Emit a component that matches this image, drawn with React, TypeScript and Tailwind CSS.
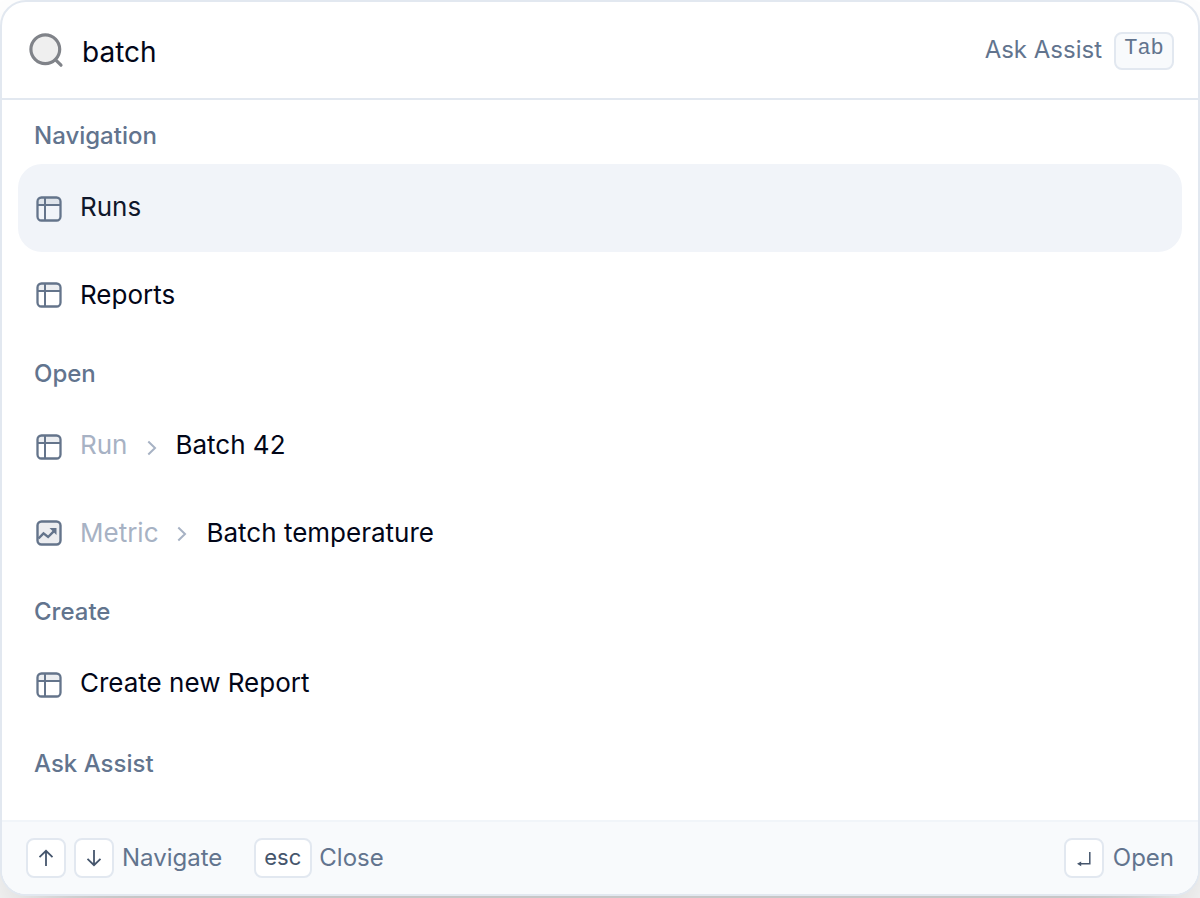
import React from 'react';

interface Item {
    label: string;
    parent?: string;
    icon: 'table' | 'metric';
    selected?: boolean;
}

interface Group {
    title: string;
    items: Item[];
}

const groups: Group[] = [
    {
        title: 'Navigation',
        items: [
            { label: 'Runs', icon: 'table', selected: true },
            { label: 'Reports', icon: 'table' },
        ],
    },
    {
        title: 'Open',
        items: [
            { label: 'Batch 42', parent: 'Run', icon: 'table' },
            { label: 'Batch temperature', parent: 'Metric', icon: 'metric' },
        ],
    },
    {
        title: 'Create',
        items: [{ label: 'Create new Report', icon: 'table' }],
    },
    { title: 'Ask Assist', items: [] },
];

const SearchIcon = () => (
    <svg className="mt-px" width="36" height="36" viewBox="0 0 36 36" fill="none" stroke="#808389" strokeWidth="3.2" strokeLinecap="round">
        <circle cx="17.3" cy="16.2" r="14.4" fill="#efefef" />
        <path d="M27.6 26.8L33 32.2" />
    </svg>
);

const TableIcon = () => (
    <svg width="26" height="26" viewBox="0 0 26 26" fill="none" stroke="#64748b" strokeWidth="2.3">
        <path d="M2 2h22v7H2z" fill="#64748b" fillOpacity="0.12" stroke="none" />
        <rect x="1.5" y="1.5" width="23" height="23" rx="4" />
        <path d="M1.5 9h23M9 1.5v23" strokeWidth="2" />
    </svg>
);

const MetricIcon = () => (
    <svg width="26" height="26" viewBox="0 0 26 26" fill="none" stroke="#64748b" strokeWidth="2.4">
        <rect x="1.5" y="1.5" width="23" height="23" rx="4" fill="#ecedf0" />
        <path d="M2.5 18.5L7.5 13.4l4.6 3.6 6.6-6.6" />
        <path d="M13.5 8h7v7z" fill="#64748b" stroke="none" />
    </svg>
);

const Chevron = () => (
    <svg width="10" height="16" viewBox="0 0 10 16" fill="none" stroke="#a7b2c4" strokeWidth="2">
        <path d="M1.3 1.5L8 8l-6.7 6.5" />
    </svg>
);

const Key = ({ children, className = 'w-10' }: { children: React.ReactNode; className?: string }) => (
    <kbd className={`flex h-10 items-center justify-center rounded-lg border-2 border-slate-200 bg-white font-[Inter,sans-serif] text-[22px] text-slate-600 ${className}`}>
        {children}
    </kbd>
);

const Row = ({ item }: { item: Item }) => (
    <li className={`group flex h-[88px] items-center rounded-3xl pl-[18px] ${item.selected ? 'bg-[#f1f4f9] text-slate-900' : 'text-slate-950'}`}>
        <span className="mt-0.5 mr-[18px] shrink-0 group-even:mt-0 group-even:mb-0.5">
            {item.icon === 'metric' ? <MetricIcon /> : <TableIcon />}
        </span>
        {item.parent && (
            <>
                <span className="mb-[3px] text-[#a7b2c4]">{item.parent}</span>
                <span className="mt-[3px] mr-[18px] ml-5 group-even:mt-0 group-even:mr-5 group-even:ml-[18px]"><Chevron /></span>
            </>
        )}
        <span className="mb-[3px]">{item.label}</span>
    </li>
);

const App: React.FC = () => {
    return (
        <div className="h-[898px] overflow-hidden bg-white font-[Inter,sans-serif]">
            <div className="flex h-[896px] flex-col overflow-hidden rounded-[26px] border-2 border-slate-200 bg-white shadow-[0_50px_100px_-24px_rgba(0,0,0,0.32)]">
                <header className="flex h-[98px] shrink-0 items-center border-b-2 border-slate-200 pr-6 pl-[26px]">
                    <SearchIcon />
                    <span className="mt-1 ml-[18px] text-[28px] text-slate-950">batch</span>
                    <span className="ml-auto text-2xl text-slate-500">Ask Assist</span>
                    <kbd className="mt-0.5 ml-3 flex h-[38px] w-[60px] justify-center rounded-lg border-2 border-slate-200 bg-slate-50 font-['Liberation_Mono',monospace] text-[22px] leading-[29px] text-slate-500">
                        Tab
                    </kbd>
                </header>

                <main className="flex-1 overflow-hidden px-4 text-[26px]">
                    {groups.map((group) => (
                        <section key={group.title} className="pt-[18px] first:pt-5 last:pt-5">
                            <h2 className="mb-3 pl-4 text-2xl leading-8 font-medium text-slate-500">{group.title}</h2>
                            <ul>
                                {group.items.map((item) => (
                                    <Row key={item.label} item={item} />
                                ))}
                            </ul>
                        </section>
                    ))}
                </main>

                <footer className="flex h-[74px] shrink-0 items-center border-t-2 border-slate-100 bg-slate-50 px-6 text-2xl text-slate-500">
                    <Key>
                        <svg width="16" height="18" viewBox="0 0 16 18" fill="none" stroke="currentColor" strokeWidth="1.8">
                            <path d="M8 17V2M1.5 8.2L8 1.8l6.5 6.4" />
                        </svg>
                    </Key>
                    <Key className="ml-2 w-10">
                        <svg width="16" height="18" viewBox="0 0 16 18" fill="none" stroke="currentColor" strokeWidth="1.8">
                            <path d="M8 1v15M1.5 9.8L8 16.2l6.5-6.4" />
                        </svg>
                    </Key>
                    <span className="ml-2">Navigate</span>
                    <Key className="ml-8 w-[58px] pr-px">esc</Key>
                    <span className="ml-[7px]">Close</span>
                    <Key className="ml-auto w-10">
                        <svg className="mt-0.5" width="14" height="16" viewBox="0 0 14 16" fill="none" stroke="currentColor" strokeWidth="1.5">
                            <path d="M12.8 1v11.8H3" />
                            <path d="M0 12.8l4.2-2.4v4.8z" fill="currentColor" stroke="none" />
                        </svg>
                    </Key>
                    <span className="ml-[9px]">Open</span>
                </footer>
            </div>
        </div>
    );
};

export default App;
